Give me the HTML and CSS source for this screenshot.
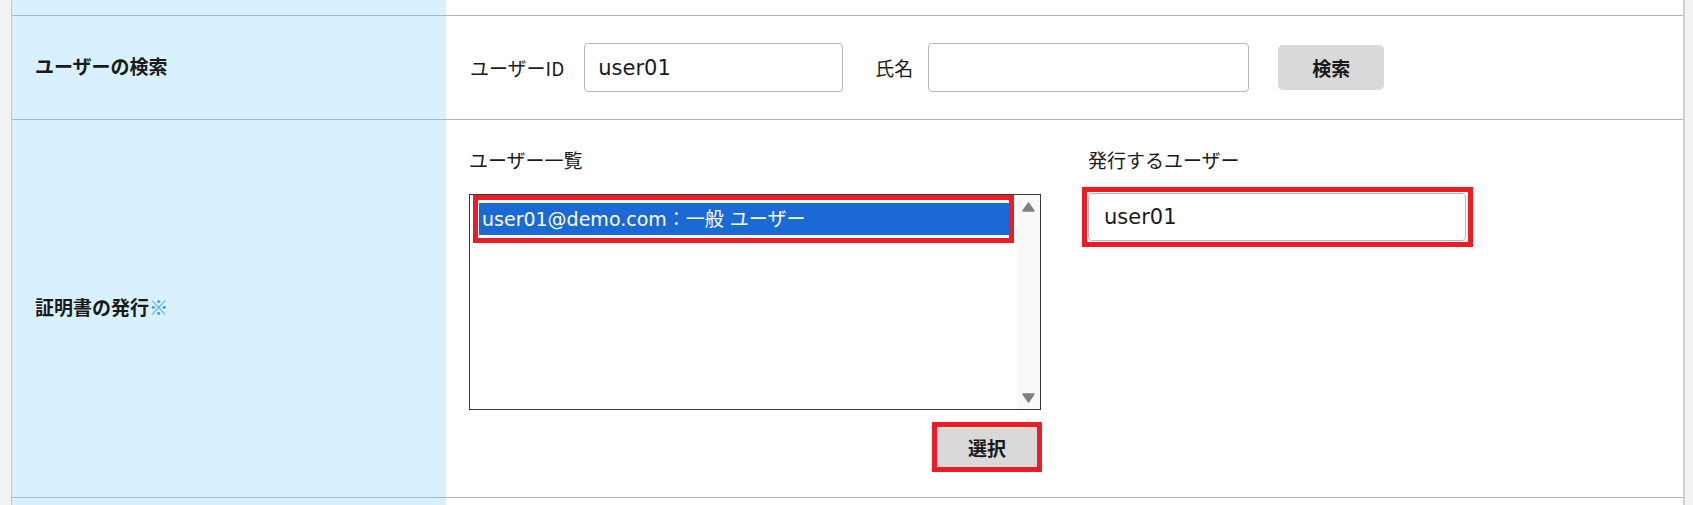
FILE: index.html
```html
<!DOCTYPE html>
<html lang="ja">
<head>
<meta charset="utf-8">
<title>証明書の発行</title>
<link rel="stylesheet" href="styles.css">
</head>
<body>
<div class="page">
  <div class="row row-top">
    <div class="head"></div>
    <div class="body"></div>
  </div>
  <div class="row row-search">
    <div class="head">ユーザーの検索</div>
    <div class="body search">
      <span class="field-label">ユーザーID</span>
      <input class="text-input input-id" type="text" value="user01">
      <span class="field-label label-name">氏名</span>
      <input class="text-input input-name" type="text" value="">
      <button class="btn btn-search" type="button">検索</button>
    </div>
  </div>
  <div class="row row-issue">
    <div class="head">証明書の発行<span class="req">※</span></div>
    <div class="body issue">
      <div class="col col-list">
        <div class="col-label">ユーザー一覧</div>
        <div class="listbox">
          <div class="options">
            <div class="option-mark">
              <div class="option selected">user01@demo.com：一般 ユーザー</div>
            </div>
          </div>
          <div class="scrollbar">
            <svg class="arrow" width="13" height="10" viewBox="0 0 13 10"><path d="M6.5 1 L12 9 L1 9 Z" fill="#808080" stroke="#808080" stroke-width="1.5" stroke-linejoin="round"/></svg>
            <svg class="arrow" width="13" height="10" viewBox="0 0 13 10"><path d="M1 1 L12 1 L6.5 9 Z" fill="#808080" stroke="#808080" stroke-width="1.5" stroke-linejoin="round"/></svg>
          </div>
        </div>
        <div class="actions">
          <button class="btn btn-select" type="button">選択</button>
        </div>
      </div>
      <div class="col col-target">
        <div class="col-label">発行するユーザー</div>
        <div class="target-mark">
          <input class="text-input input-target" type="text" value="user01">
        </div>
      </div>
    </div>
  </div>
  <div class="row row-bottom">
    <div class="head"></div>
    <div class="body"></div>
  </div>
</div>
</body>
</html>
```

FILE: styles.css
```css
* {
  box-sizing: border-box;
}

html, body {
  margin: 0;
  padding: 0;
  height: 505px;
  overflow: hidden;
  background: #f2f2f2;
}

body {
  font-family: "DejaVu Sans", "Noto Sans CJK JP", sans-serif;
  font-size: 19px;
  color: #1a1a1a;
}

.page {
  margin-left: 11px;
  width: 1674px;
  height: 505px;
  background: #ffffff;
  border-left: 1px solid #c4c4c4;
  border-right: 2px solid #cfcfcf;
}

.row {
  display: grid;
  grid-template-columns: 434px 1fr;
  border-bottom: 1px solid #a9b7c0;
}

.head {
  background: #d9f0ff;
  padding: 0 0 4px 23px;
  display: flex;
  align-items: center;
  font-weight: bold;
  font-family: "Noto Sans CJK JP", sans-serif;
}

.req {
  color: #19a3ef;
  font-weight: normal;
}

.row-top {
  height: 16px;
}

.row-search {
  height: 104px;
}

.row-issue {
  height: 378px;
}

.row-bottom {
  height: 20px;
  border-bottom: none;
}

.body {
  background: #ffffff;
}

.search {
  display: flex;
  align-items: center;
  padding-left: 24px;
}

.field-label {
  margin-right: 20px;
  font-family: "Noto Sans CJK JP", sans-serif;
}

.label-name {
  margin-left: 32px;
  margin-right: 15px;
}

.text-input {
  height: 49px;
  border: 1px solid #b7b7b7;
  border-radius: 4px;
  padding: 0 13px;
  font-family: "DejaVu Sans", "Noto Sans CJK JP", sans-serif;
  font-size: 21px;
  color: #1a1a1a;
  background: #ffffff;
}

.input-id {
  width: 259px;
}

.input-name {
  width: 321px;
}

.btn {
  border: none;
  background: #d9d9d9;
  font-family: "Noto Sans CJK JP", sans-serif;
  font-weight: bold;
  font-size: 19px;
  color: #1a1a1a;
  padding: 0;
}

.btn-search {
  margin-left: 29px;
  width: 106px;
  height: 45px;
  border-radius: 5px;
}

.issue {
  display: flex;
  gap: 41px;
  padding: 26px 0 0 23px;
}

.col-list {
  width: 572px;
}

.col-label {
  height: 28px;
  line-height: 28px;
  font-family: "Noto Sans CJK JP", sans-serif;
}

.listbox {
  margin-top: 20px;
  height: 216px;
  border: 1px solid #3a3a3a;
  display: flex;
}

.options {
  flex: 1;
  padding: 0 3px 0 3px;
}

.option-mark {
  border: 5px solid #ed1c24;
  padding: 3px 0 3px 1px;
}

.option {
  height: 32px;
  line-height: 32px;
  padding-left: 3px;
  white-space: nowrap;
}

.option.selected {
  background: #1b69d5;
  color: #ffffff;
}

.scrollbar {
  width: 23px;
  background: #f9f9f9;
  display: flex;
  flex-direction: column;
  justify-content: space-between;
  align-items: center;
  padding: 7px 0 6px;
}

.arrow {
  display: block;
}

.actions {
  display: flex;
  justify-content: flex-end;
  margin-top: 17px;
  padding-right: 4px;
}

.btn-select {
  width: 100px;
  height: 40px;
  outline: 5px solid #ed1c24;
}

.col-target {
  width: 391px;
}

.col-target .col-label {
  padding-left: 6px;
}

.target-mark {
  margin-top: 13px;
  width: 391px;
  border: 5px solid #ed1c24;
  padding: 1px 2px 1px 1px;
}

.input-target {
  display: block;
  width: 378px;
  height: 48px;
  padding-left: 15px;
}
```
